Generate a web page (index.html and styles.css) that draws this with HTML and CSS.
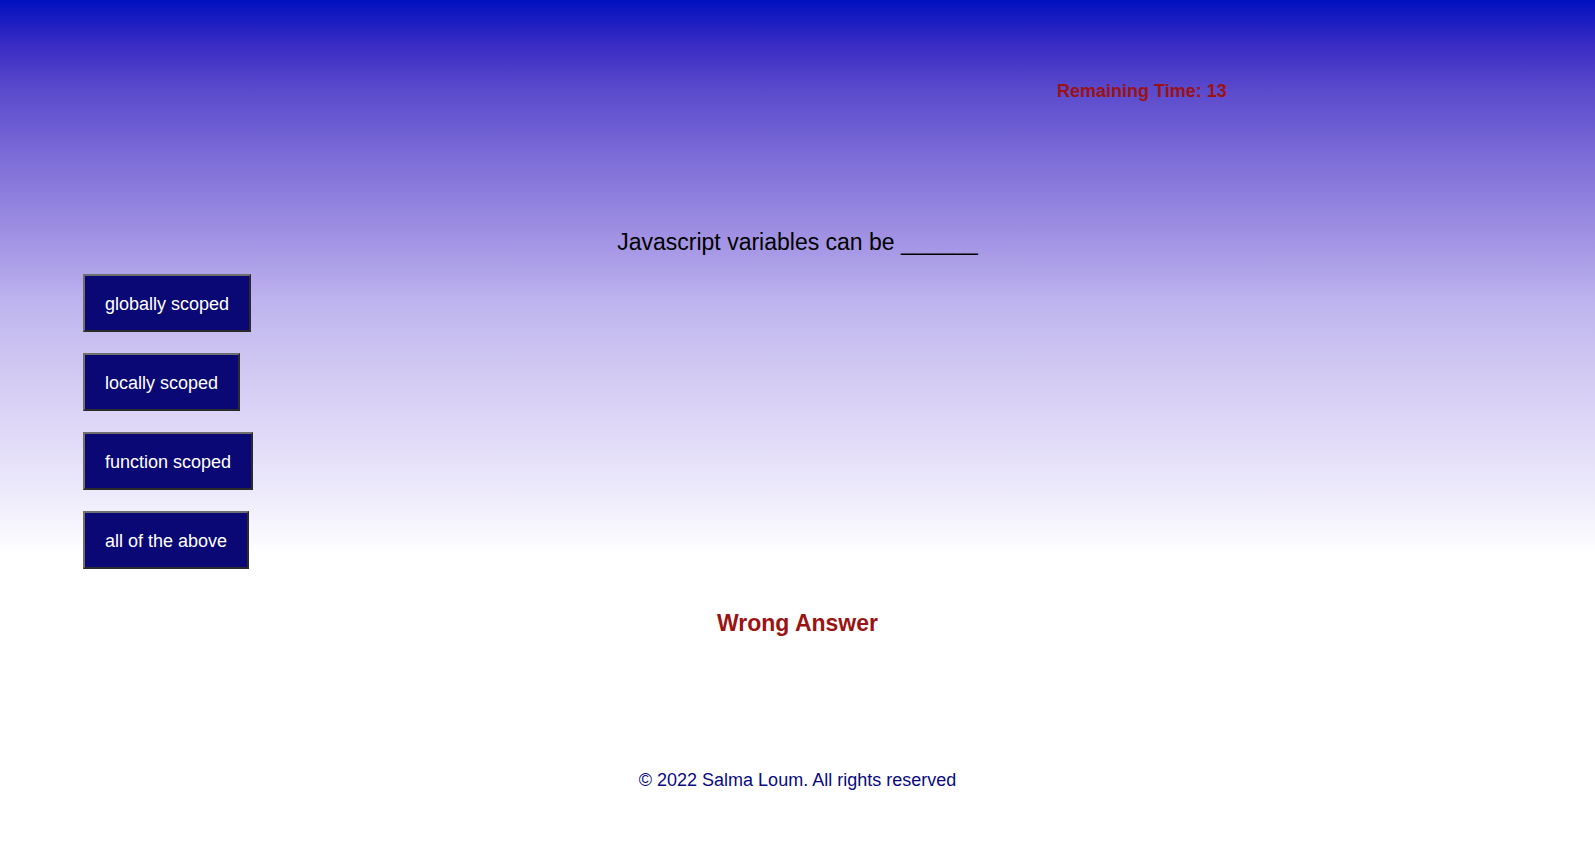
FILE: index.html
```html
<!DOCTYPE html>
<html lang="en">
<head>
<meta charset="utf-8">
<title>Code Quiz</title>
<link rel="stylesheet" href="styles.css">
</head>
<body>
<div class="page">
  <header class="top">
    <p class="timer">Remaining Time: 13</p>
  </header>
  <main class="quiz">
    <h2 class="question">Javascript variables can be ______</h2>
    <div class="choices">
      <button class="choice">globally scoped</button>
      <button class="choice">locally scoped</button>
      <button class="choice">function scoped</button>
      <button class="choice">all of the above</button>
    </div>
    <p class="result">Wrong Answer</p>
  </main>
  <footer class="foot">© 2022 Salma Loum. All rights reserved</footer>
</div>
</body>
</html>
```
FILE: styles.css
```css
html, body {
  margin: 0;
  padding: 0;
  background: #ffffff;
}
body {
  font-family: "Liberation Sans", Arial, Helvetica, sans-serif;
  min-height: 862px;
  background: linear-gradient(to bottom,
    #0010c0 0px,
    #3a2cc4 45px,
    #5a4acc 90px,
    #7e6ed8 160px,
    #a293e4 240px,
    #bdb3ee 300px,
    #d1c9f2 370px,
    #e1dbf8 440px,
    #efecfb 500px,
    #ffffff 555px,
    #ffffff 100%);
}
.page {
  display: flex;
  flex-direction: column;
}
.top {
  box-sizing: border-box;
  height: 228px;
  padding-top: 81px;
  padding-left: 1057px;
}
.timer {
  margin: 0;
  font-size: 18px;
  line-height: 21px;
  font-weight: bold;
  color: #9c1212;
}
.quiz {
  display: flex;
  flex-direction: column;
}
.question {
  margin: 0;
  font-size: 23px;
  line-height: 28px;
  font-weight: normal;
  text-align: center;
  color: #000;
}
.choices {
  margin-top: 18px;
  padding-left: 83px;
  display: flex;
  flex-direction: column;
  align-items: flex-start;
  gap: 21px;
}
.choice {
  box-sizing: border-box;
  height: 58px;
  padding: 2px 20px 0;
  font-family: "Liberation Sans", Arial, Helvetica, sans-serif;
  font-size: 18px;
  color: #ffffff;
  background: #0a0874;
  border-width: 2px;
  border-style: solid;
  border-color: #6f6f6f #2a2a2a #2a2a2a #6f6f6f;
  cursor: pointer;
}
.result {
  margin: 40px 0 0;
  font-size: 23px;
  line-height: 28px;
  font-weight: bold;
  text-align: center;
  color: #9a1414;
}
.foot {
  margin-top: 133px;
  font-size: 18px;
  line-height: 21px;
  text-align: center;
  color: #0a0a80;
}
```
